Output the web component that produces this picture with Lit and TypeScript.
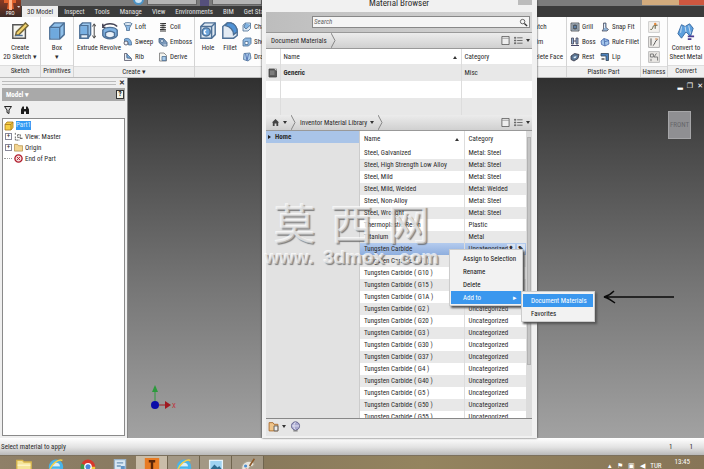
import { LitElement, html, svg, css, nothing } from "lit";

const icon = (size: number, body: unknown) =>
  html`<svg width=${size} height=${size} viewBox="0 0 20 20" fill="none" stroke="#4d7096" stroke-width="1.6" aria-hidden="true">${body}</svg>`;

const art: Record<string, unknown> = {
  sketch: svg`<path d="M2 3h14v15H2z" fill="#f6f6f0" stroke="#555"/><path d="M5 15l1-4L16 1l3 3L9 14z" fill="#f2d36b" stroke="#7a6a3a"/><path d="M5 15h8"/>`,
  box: svg`<path d="M2 6l5-5h11v13l-5 5H2z" fill="#8fc0ea"/><path d="M2 6h11v13M13 6l5-5"/><path d="M3 7h9v11H3z" fill="#6fa9dd" stroke="none"/>`,
  extrude: svg`<path d="M2 4l3-3h9v13l-3 4H2z" fill="#9cc8ee"/><path d="M2 4h9v14"/><path d="M3 5h7v9H3z" fill="#79b0e2" stroke="none"/><path d="M3 14h8v4H3z" fill="#e8eef4"/><path d="M18 3v14M16 5l2-3 2 3M16 15l2 3 2-3" stroke="#333" stroke-width="1"/>`,
  revolve: svg`<path d="M2 9c3-4 13-4 16 0v6c-3 5-13 5-16 0z" fill="#7fb2e2"/><path d="M5 12c3-2 7-2 10 0v4c-3 2-7 2-10 0z" fill="#e9f1f8"/><path d="M2 5c4-4 12-4 16 0M2 2v4h3" stroke="#445"/>`,
  loft: svg`<path d="M2 3h16l-5 9v5H7v-5z" fill="#8fbce6"/><ellipse cx="10" cy="4" rx="8" ry="3" fill="#e6f0f9"/>`,
  sweep: svg`<path d="M3 4c8-4 15 2 14 12h-6c0-6-3-7-8-6z" fill="#7eb0df"/><circle cx="6" cy="12" r="4" fill="#f1f5fa" stroke="#445"/>`,
  rib: svg`<path d="M3 3v14h14v-4L8 11V3z" fill="#e8edf3" stroke="#556"/><path d="M8 4l8 8H8z" fill="#7eb0df"/>`,
  coil: svg`<path d="M4 3h12M4 7h12M4 11h12M4 15h12M4 18h12" stroke="#333" stroke-width="2"/><path d="M4 3l12 4M4 7l12 4M4 11l12 4" stroke="#777"/>`,
  emboss: svg`<path d="M2 3h9l7 8v7h-8L2 11z" fill="#7b99bb" stroke="#3b5878"/><circle cx="8" cy="8" r="3" fill="#e6eef7"/><path d="M11 16h6" stroke="#fff"/>`,
  derive: svg`<path d="M3 2h9l5 5v11H3z" fill="#f3f3ee" stroke="#777"/><path d="M8 9h8v8H8z" fill="#a9cbe9"/>`,
  hole: svg`<path d="M2 5l4-4h12v13l-4 4H2z" fill="#dfe9f2"/><path d="M2 5h12v13M14 5l4-4"/><circle cx="8" cy="11" r="4.500" fill="#6ea6dc"/><path d="M8 9a2 2 0 0 0 0 4" stroke="#fff"/>`,
  fillet: svg`<path d="M2 5l5-4h4c4 1 7 5 7 10v4l-4 3H2z" fill="#e3ebf3"/><path d="M7 1h4c4 1 7 5 7 10l-4 3c0-5-4-9-9-10z" fill="#4f92d6"/>`,
  chamfer: svg`<path d="M2 6l5-4h10v11l-5 5H2z" fill="#dbe8f4"/><path d="M7 2l-3 8 4 4 9-8" fill="#7fb2e2"/>`,
  shell: svg`<path d="M2 6l5-4h11v11l-5 5H2z" fill="#8fb9e2"/><path d="M6 9h6v6H6z" fill="#fff"/>`,
  draft: svg`<path d="M4 3l12-1 2 11-6 5-9-3z" fill="#a8c9ea"/><path d="M7 3l3 14M13 4l-3 13" stroke="#4565a8"/>`,
  grill: svg`<path d="M2 2h16v16H2z" fill="#b6c8da" stroke="#444"/><circle cx="10" cy="10" r="4" fill="#5d7fa3" stroke="#333"/><path d="M4 6h12M4 14h12" stroke="#555"/>`,
  boss: svg`<path d="M3 2h4v12H3zM12 2h4v12h-4z" fill="#91add0" stroke="#445"/><path d="M2 17h16M7 8h5" stroke="#446" stroke-width="2"/>`,
  rest: svg`<path d="M2 8l7-5 9 2-2 8-8 5-6-3z" fill="#5d7590" stroke="#334"/><path d="M6 9l8-2-1 5-6 2z" fill="#e3edf6"/>`,
  snap: svg`<path d="M7 2h5v9l5 4-3 3H4l3-4z" fill="#8fb2d6" stroke="#556"/><path d="M9 4v8" stroke="#fff"/>`,
  rule: svg`<path d="M2 8l6-5 9 3 1 8-8 4-7-3z" fill="#a3c5ea" stroke="#4565a8"/><path d="M8 3l2 15M10 9l8-2" stroke="#3c5fa6"/>`,
  lip: svg`<path d="M2 3h15v14h-5V8H2z" fill="#4d82bd" stroke="#345"/><path d="M3 14h6" stroke="#555" stroke-width="3"/>`,
  wire: svg`<path d="M1 1h18v18H1z" fill="#f3f1ee" stroke="#ccc"/><path d="M4 14c5 2 3-8 8-7h4M12 7v6" stroke="#553"/><circle cx="12" cy="5" r="2" fill="#e58a3c" stroke="none"/>`,
  cable: svg`<path d="M1 1h18v18H1z" fill="#f1efec" stroke="#aaa"/><path d="M5 4v12M8 16c4-1 3-9 8-10" stroke="#555"/><path d="M12 5h4" stroke="#d77d3a"/>`,
  route: svg`<path d="M1 1h18v18H1z" fill="#e9e7e4" stroke="#bbb"/><path d="M4 5h5v5H4zM10 10h6v6M14 4l-4 6M5 13v4" stroke="#777"/>`,
  sheet: svg`<path d="M1 13L5 3l4 2 5-3 4 5-3 9-5-5-5 7z" fill="#5c9fdd" stroke="#3568a0" stroke-width="1"/><path d="M5 5l-1 7M13 4l2 9M9 5l1 6" stroke="#cfe2f4" stroke-width="1"/><path d="M12 16h7M12 19h4" stroke="#4b3c91" stroke-width="2"/>`,
  filter: svg`<path d="M3 3h14l-5 7v7l-4-2v-5z" fill="#ddd" stroke="#222" stroke-width="2"/>`,
  find: svg`<path d="M2 18V9l3-6h3v15zM18 18V9l-3-6h-3v15zM8 8h4v5H8z" fill="#1c1c1c" stroke="none"/>`,
  part: svg`<path d="M2 7l4-5h12v11l-4 5H2z" fill="#f6cf45" stroke="#a8761b"/><path d="M2 7h12v11M14 7l4-5" stroke="#a8761b"/>`,
  view: svg`<path d="M3 2v4M3 10v8h9M8 6h6v6H8z" stroke="#333" stroke-dasharray="4 1"/><path d="M13 14h6" stroke="#333" stroke-width="2"/>`,
  folder: svg`<path d="M1 3h7l2 3h9v12H1z" fill="#f3d592" stroke="#b08c43"/>`,
  end: svg`<circle cx="10" cy="10" r="8" fill="#f5dede" stroke="#b01c2c" stroke-width="3"/><path d="M6 6l8 8M14 6l-8 8" stroke="#b01c2c" stroke-width="2"/>`,
  search: svg`<circle cx="8" cy="8" r="5" stroke="#333"/><path d="M12 12l6 6" stroke="#333" stroke-width="3"/>`,
  home: svg`<path d="M2 10l8-8 8 8h-2v8h-4v-6H8v6H4v-8z" fill="#444" stroke="none"/>`,
  pane: svg`<path d="M2 1h16v18H2z" fill="#eee" stroke="#444"/><path d="M2 5h16" stroke="#888"/>`,
  list: svg`<path d="M1 3h3v2H1zM1 9h3v2H1zM1 15h3v2H1zM7 4h12M7 10h12M7 16h12" stroke="#444"/>`,
  swatch: svg`<path d="M2 2h15v16H2z" fill="#5c5c5c" stroke="#444"/><path d="M4 5h9v9H4z" fill="#7d7d7d" stroke="none"/><path d="M12 1l5 5V1z" fill="#ddd" stroke="none"/>`,
  library: svg`<path d="M2 3h7l2 3h7v12H2z" fill="#f0c58a" stroke="#a8692a"/><path d="M11 9h7v9h-7z" fill="#eee" stroke="#555"/>`,
  sphere: svg`<circle cx="10" cy="9" r="7.500" fill="#a9a9cf" stroke="#5c5c88"/><path d="M3 9h14M10 2c-4 4-4 10 0 14" stroke="#e9e9f6"/><path d="M6 18h8" stroke="#555"/>`,
  explorer: svg`<path d="M1 3h7l2 2h9v15H1z" fill="#f5e59a" stroke="#d9b64b"/><path d="M2 9h16" stroke="#fff7cf"/>`,
  ie: svg`<circle cx="10" cy="11" r="7" fill="#d9eef8" stroke="#49b4ea" stroke-width="4"/><path d="M5 12h11" stroke="#49b4ea" stroke-width="3"/><path d="M2 17C3 8 13 1 18 3" stroke="#f3d04b" stroke-width="2"/>`,
  chrome: svg`<circle cx="10" cy="11" r="9" fill="#d9382c" stroke="none"/><path d="M10 11L2 7a9 9 0 0 0 5 13z" fill="#3d9a46" stroke="none"/><path d="M10 11l-3 9a9 9 0 0 0 12-9z" fill="#f4cc3a" stroke="none"/><circle cx="10" cy="11" r="4" fill="#4a86d8" stroke="#fff"/>`,
  notes: svg`<path d="M3 2h14v18H3z" fill="#d9e8f4" stroke="#9ab2c8"/><path d="M6 6h8M6 10h5" stroke="#6f93b5"/><path d="M11 10h5v7h-5z" fill="#5f93c5" stroke="none"/>`,
  inventor: svg`<path d="M1 0h18v20H1z" fill="#e87b24" stroke="none"/><path d="M6 4h8M10 4v16" stroke="#5a2408" stroke-width="3"/>`,
  photos: svg`<path d="M2 3h16v13H2z" fill="#9fd3f2" stroke="#e8f4fb"/><path d="M3 14l5-6 4 4 2-2 4 5z" fill="#2f6c8f" stroke="none"/>`,
  paint: svg`<path d="M2 13c0-7 7-11 14-8 4 3 0 6-3 6s-1 7-5 8-6-2-6-6z" fill="#e8e4dc" stroke="#aaa28e"/><circle cx="7" cy="10" r="2" fill="#4d8fd0" stroke="none"/><circle cx="8" cy="15" r="2" fill="#d8493a" stroke="none"/><path d="M12 10l6-9" stroke="#8c5a2a" stroke-width="2"/>`,
};

type Cmd = [string, string];
interface Group { id: string; title: string; menu?: boolean; big: Cmd[]; cols: Cmd[][] }

const leftGroups: Group[] = [
  { id: "sketch", title: "Sketch", big: [["sketch", "Create\n2D Sketch ▾"]], cols: [] },
  { id: "primitives", title: "Primitives", big: [["box", "Box\n▾"]], cols: [] },
  { id: "create", title: "Create", menu: true, big: [["extrude", "Extrude"], ["revolve", "Revolve"]],
    cols: [[["loft", "Loft"], ["sweep", "Sweep"], ["rib", "Rib"]], [["coil", "Coil"], ["emboss", "Emboss"], ["derive", "Derive"]]] },
  { id: "modify", title: "", big: [["hole", "Hole"], ["fillet", "Fillet"]],
    cols: [[["chamfer", "Chamfer"], ["shell", "Shell"], ["draft", "Draft"]]] },
];
const rightGroups: Group[] = [
  { id: "surface", title: "", big: [], cols: [[["", "Patch"], ["", "Trim"], ["", "Delete Face"]]] },
  { id: "plastic", title: "Plastic Part", big: [],
    cols: [[["grill", "Grill"], ["boss", "Boss"], ["rest", "Rest"]], [["snap", "Snap Fit"], ["rule", "Rule Fillet"], ["lip", "Lip"]]] },
  { id: "harness", title: "Harness", big: [], cols: [[["wire", ""], ["cable", ""], ["route", ""]]] },
  { id: "convert", title: "Convert", big: [["sheet", "Convert to\nSheet Metal"]], cols: [] },
];

const tabs = ["3D Model", "Inspect", "Tools", "Manage", "View", "Environments", "BIM", "Get Started"];

const materials: [string, string][] = [
  ["Steel, Galvanized", "Metal: Steel"],
  ["Steel, High Strength Low Alloy", "Metal: Steel"],
  ["Steel, Mild", "Metal: Steel"],
  ["Steel, Mild, Welded", "Metal: Welded"],
  ["Steel, Non-Alloy", "Metal: Steel"],
  ["Steel, Wrought", "Metal: Steel"],
  ["Thermoplastic Resin", "Plastic"],
  ["Titanium", "Metal"],
  ["Tungsten Carbide", "Uncategorized"],
  ...["G1", "G10", "G15", "G1A", "G2", "G20", "G3", "G30", "G37", "G4", "G40", "G5", "G50", "G55"].map(
    (g): [string, string] => [`Tungsten Carbide ( ${g} )`, "Uncategorized"],
  ),
];

class AppRoot extends LitElement {
  static properties = { selected: { state: true } };
  declare selected: string;

  constructor() {
    super();
    this.selected = "Tungsten Carbide";
  }

  static styles = css`
    :host {
      display: flex; flex-direction: column; height: 100vh; overflow: hidden; position: relative;
      font: 7px/10px "Roboto Condensed", Roboto, "Liberation Sans", sans-serif; color: #2c2c2c; background: #eee;
    }
    * { box-sizing: border-box; }
    button { font: inherit; color: inherit; background: none; border: 0; padding: 0; margin: 0; white-space: nowrap; }
    svg { display: block; flex: none; }
    .shell { flex: 1; min-height: 0; display: flex; flex-direction: column; position: relative; }

    .top { display: flex; background: #3b3b3b; flex: none; height: 17px; }
    .app-btn { width: 21px; background: linear-gradient(#8b3a22, #3a2a26); color: #fff; display: flex; justify-content: center; }
    .bars { flex: 1; min-width: 0; display: flex; flex-direction: column; }
    .quick { height: 6px; background: #7c7c7c; display: flex; overflow: hidden; padding-left: 112px; gap: 3px; }
    .orb { width: 11px; height: 11px; border-radius: 50%; background: #cfe6f6; border: 2px solid #4c93c6; margin-top: -6px; }
    .combo { width: 50px; height: 5px; background: #b4b4b4; border: 1px solid #666; border-top: 0; }
    .grid-ic { width: 9px; background: #55507c; }
    .desk { margin-left: auto; width: 62px; height: 5px; background: linear-gradient(90deg, #d2ab7d 60%, #cf5740 60%); }
    .tabs { display: flex; height: 11px; color: #e2e2e2; }
    .tab { padding: 0 5px; }
    .tab.on { background: #eee; color: #333; padding: 0 5px; margin: 0 1px; }

    .ribbon { display: flex; flex: none; background: #fdfdfd; border-bottom: 1px solid #bbb; height: 61px; }
    .group { display: flex; flex-direction: column; border-right: 1px solid #d4d4d4; }
    .group .body { flex: 1; display: flex; gap: 2px; padding: 2px 3px; }
    .group h2 { margin: 0; font: inherit; text-align: center; background: #efefef; border-top: 1px solid #ddd; height: 12px; white-space: nowrap; }
    .big { display: flex; flex-direction: column; align-items: center; gap: 4px; padding-top: 3px; line-height: 9px; white-space: pre; min-width: 20px; }
    .col { display: flex; flex-direction: column; }
    .cmd { display: flex; align-items: center; gap: 2px; height: 15px; text-align: left; }
    .sketch { width: 41px; } .primitives { width: 33px; } .create { width: 121px; }
    .sketch .body, .primitives .body, .convert .body, .harness .body { justify-content: center; padding: 2px 0; }
    .create .col { width: 33px; }
    .surface { width: 40px; margin-left: auto; }
    .surface .body { justify-content: flex-end; }
    .plastic { width: 74px; } .plastic .col { width: 28px; }
    .harness { width: 27px; }
    .convert { width: 36px; border: 0; }

    .work { flex: 1; min-height: 0; display: flex; }
    .browser { width: 128px; flex: none; display: flex; flex-direction: column; border-right: 1px solid #888; padding: 0 2px 2px; background: #efefef; }
    .grip { height: 10px; display: flex; align-items: center; gap: 3px; font-weight: bold; }
    .grip i { flex: 1; height: 4px; border: solid #bbb; border-width: 1px 0; }
    .head { height: 13px; background: #a9a9a9; color: #fff; font-weight: bold; display: flex; align-items: center; padding: 0 1px 0 4px; justify-content: space-between; }
    .help { background: #f4f4e8; color: #111; border: 1px solid #333; width: 8px; height: 9px; line-height: 7px; }
    .tools { height: 17px; display: flex; align-items: center; gap: 7px; padding-left: 1px; }
    .tree { flex: 1; background: #fff; border: 1px solid #8a8a8a; margin: 0; padding: 1px; list-style: none; }
    .tree li { display: flex; align-items: center; height: 11px; gap: 2px; }
    .tree .exp { width: 7px; height: 7px; border: 1px solid #889; line-height: 5px; text-align: center; margin-left: 1px; }
    .tree .stub { width: 8px; height: 1px; border-top: 1px dotted #999; }
    .tree mark { background: #3399f3; color: #d5ecff; line-height: 9px; }

    .canvas { flex: 1; background: linear-gradient(#303030, #4a4a4a 20%, #787878 60%, #a2a2a2); position: relative; }
    .mdi { position: absolute; right: 1px; top: 3px; display: flex; gap: 4px; color: #fff; font: bold 7px/10px "DejaVu Sans", sans-serif; }
    .cube { position: absolute; right: 13px; top: 33px; width: 23px; height: 28px; background: #8f8f92; border: 1px solid #a6a6a8; color: #66666a; }
    .triad { position: absolute; left: 20px; bottom: 20px; }

    .dialog { position: absolute; left: 262px; top: 0; bottom: 0; width: 275px; display: flex; flex-direction: column; background: #e6e6e6; border: solid #f1f1f1; border-width: 0 5px 2px 4px; box-shadow: 0 0 2px #333; }
    .title { margin: 0; height: 12px; font-weight: normal; font-size: 9px; line-height: 6px; background: #f1f1f1; flex: none; display: flex; justify-content: center; position: relative; }
    .close { position: absolute; right: 0; top: 0; width: 14px; height: 5px; background: #bcbcbc; }
    .searchbar { height: 21px; flex: none; background: linear-gradient(90deg, #bdbdbd, #d6d6d6); display: flex; padding: 4px 2px 4px 46px; border-bottom: 1px solid #999; }
    .search { flex: 1; display: flex; align-items: center; background: #f5f5f5; border: 1px solid #888; padding-right: 1px; }
    .search input { flex: 1; min-width: 0; border: 0; background: none; font: inherit; font-style: italic; padding: 0 1px; outline: 0; }
    .search input::placeholder { color: #666; }
    .crumbs { height: 16px; flex: none; display: flex; align-items: center; background: linear-gradient(#ececec, #d0d0d0); border-bottom: 1px solid #999; padding: 0 2px 0 5px; gap: 4px; }
    .chev { width: 5px; height: 15px; }
    .push { margin-left: auto; display: flex; gap: 4px; }
    .push button, .drop { display: flex; align-items: center; gap: 3px; }
    .tri { width: 0; height: 0; border: 2px solid transparent; border-top: 3px solid #333; border-bottom: 0; }
    .tri.up { border: 2px solid transparent; border-bottom: 3px solid #333; border-top: 0; float: right; margin: 4px 1px 0 0; }

    table { border-collapse: collapse; table-layout: fixed; width: 100%; background: #fff; }
    th, td { text-align: left; font-weight: normal; padding: 0 4px; white-space: nowrap; overflow: hidden; border-right: 1px solid #ddd; }
    th:last-child, td:last-child { border-right: 0; }
    .doc { flex: none; }
    .doc th { height: 15px; } .doc td { height: 17px; }
    .doc th, .doc td { padding: 0 3px; }
    .doc td:first-child { padding: 0 2px; }
    .doc tbody tr:nth-child(odd), .lib tbody tr:nth-child(even) { background: #e8e8e8; }
    .c-ic { width: 14px; } .c-cat { width: 71px; } .c-cat2 { width: 62px; }
    .split { flex: 1; min-height: 0; display: flex; border-bottom: 1px solid #888; }
    .side { width: 94px; flex: none; background: #e2e2e2; border-right: 1px solid #ccc; }
    .side button { width: 100%; height: 12px; background: #a9c4e8; text-align: left; font-weight: bold; padding-left: 2px; display: flex; align-items: center; gap: 4px; }
    .side button i { width: 0; height: 0; border: 2px solid transparent; border-left: 3px solid #222; border-right: 0; }
    .list { flex: 1; min-width: 0; overflow: hidden; }
    .lib th { height: 16px; } .lib td { height: 12px; }
    .lib tbody tr.sel { background: linear-gradient(#b4cbee, #8eaede); }
    .acts { float: right; display: flex; gap: 2px; margin-right: -3px; }
    .acts button { background: #d9e2f0; width: 8px; height: 10px; font-weight: bold; text-align: center; }
    .scroll { width: 6px; background: #dcdcdc; display: flex; flex-direction: column; padding: 6px 1px 53px; }
    .scroll i { flex: 1; background: #c4c4c4; border: 1px solid #b2b2b2; }
    .foot { height: 17px; flex: none; display: flex; align-items: center; gap: 4px; padding: 0 2px 2px; }

    .menu { position: absolute; display: flex; flex-direction: column; width: 74px; padding: 2px 1px 1px; background: #f2f2f2; border: 1px solid #ccc; box-shadow: 2px 2px 2px #555; }
    .ctx { left: 449px; top: 249px; } .sub { left: 521px; top: 291px; }
    .menu button { height: 13px; padding: 0 4px 0 12px; text-align: left; display: flex; justify-content: space-between; align-items: center; color: #111; }
    .sub button { padding-left: 8px; }
    .menu .hot { background: #3a97ee; color: #fff; }
    .arrow { position: absolute; left: 602px; top: 289px; }

    .mark { position: absolute; left: 265px; top: 194px; width: 174px; color: rgba(225, 225, 225, 0.55); pointer-events: none; text-shadow: -1px -1px 0 rgba(255, 255, 255, 0.7), 1px 1px 1px rgba(90, 90, 90, 0.75); }
    .mark .cn { display: flex; justify-content: center; gap: 15px; font: 42px/56px "Noto Sans CJK SC", sans-serif; height: 54px; }
    .mark .url { display: flex; justify-content: space-between; font: bold 19px/20px "Liberation Sans", sans-serif; }

    .status { height: 17px; flex: none; display: flex; align-items: center; background: linear-gradient(#fff, #e2e2e2 55%, #b9b9b9); padding: 0 11px 0 1px; gap: 17px; }
    .status .msg { flex: 1; }
    .taskbar { height: 14px; flex: none; display: flex; overflow: hidden; background: linear-gradient(90deg, #8f8068, #85765b 30%, #94845f 60%, #877557); border-top: 1px solid #7b705d; padding-left: 8px; color: #fff; }
    .taskbar button { width: 32px; height: 18px; display: flex; justify-content: center; padding-top: 2px; flex: none; }
    .taskbar .open { background: #a39885; border-right: 1px solid #6f644e; }
    .taskbar .now { background: #c9bda9; }
    .tray { margin-left: auto; display: flex; gap: 5px; padding: 5px 14px 0 0; }
    .tray time { margin: -4px 0 0 8px; }
  `;

  private group(g: Group) {
    return html`<section class="group ${g.id}">
      <div class="body">
        ${g.big.map(([i, t]) => html`<button class="big">${icon(18, art[i])}<span>${t}</span></button>`)}
        ${g.cols.map((c) => html`<div class="col">${c.map(([i, t]) => html`<button class="cmd" aria-label=${t || i}>${i ? icon(t ? 10 : 12, art[i]) : nothing}${t}</button>`)}</div>`)}
      </div>
      <h2>${g.title}${g.menu ? " ▾" : ""}</h2>
    </section>`;
  }

  private viewButtons() {
    return html`<div class="push">
      <button aria-label="Show pane">${icon(9, art.pane)}</button>
      <button aria-label="View options">${icon(9, art.list)}<i class="tri"></i></button>
    </div>`;
  }

  private chevron() {
    return html`<svg class="chev" viewBox="0 0 5 15" fill="none" stroke="#888" aria-hidden="true"><path d="M0 0l4 7.500L0 15" /></svg>`;
  }

  private dialog() {
    return html`<section class="dialog" aria-label="Material Browser">
      <h1 class="title">Material Browser<button class="close" aria-label="Close"></button></h1>
      <div class="searchbar"><label class="search"><input aria-label="Search" placeholder="Search" />${icon(9, art.search)}</label></div>
      <nav class="crumbs"><button>Document Materials</button>${this.chevron()}${this.viewButtons()}</nav>
      <table class="doc">
        <colgroup><col class="c-ic" /><col /><col class="c-cat" /></colgroup>
        <thead><tr><th></th><th>Name<i class="tri up"></i></th><th>Category</th></tr></thead>
        <tbody>
          <tr><td>${icon(10, art.swatch)}</td><td><b>Generic</b></td><td>Misc</td></tr>
          <tr><td></td><td></td><td></td></tr>
          <tr><td></td><td></td><td></td></tr>
        </tbody>
      </table>
      <nav class="crumbs">
        <button class="drop" aria-label="Home">${icon(9, art.home)}<i class="tri"></i></button>${this.chevron()}
        <button class="drop">Inventor Material Library <i class="tri"></i></button>${this.chevron()}${this.viewButtons()}
      </nav>
      <div class="split">
        <div class="side"><button><i></i>Home</button></div>
        <div class="list">
          <table class="lib">
            <colgroup><col /><col class="c-cat2" /></colgroup>
            <thead><tr><th>Name<i class="tri up"></i></th><th>Category</th></tr></thead>
            <tbody>
              ${materials.map(([n, c]) => html`<tr class=${n === this.selected ? "sel" : ""} @click=${() => (this.selected = n)}>
                <td>${n}</td><td>${n === this.selected ? html`<span class="acts"><button>⬆</button><button>✎</button></span>` : nothing}${c}</td></tr>`)}
            </tbody>
          </table>
        </div>
        <div class="scroll"><i></i></div>
      </div>
      <div class="foot"><button class="drop" aria-label="Libraries">${icon(11, art.library)}<i class="tri"></i></button><button aria-label="New material">${icon(11, art.sphere)}</button></div>
    </section>`;
  }

  render() {
    return html`
      <div class="shell">
        <header class="top">
          <button class="app-btn" aria-label="Application menu">
            <svg width="20" height="17" viewBox="0 0 20 17"><path d="M3 0h12v3h-3l1 6H6l1-6H3z" fill="#e0622c" /><path d="M8 0h3v10H8z" fill="#ffb48a" /><text x="5" y="15" font-size="5" fill="#fff">PRO</text><path d="M16 6h3l-1 2z" fill="#ddd" /></svg>
          </button>
          <div class="bars">
            <div class="quick"><i class="orb"></i><i class="combo"></i><i class="grid-ic"></i><i class="combo"></i><i class="desk"></i></div>
            <nav class="tabs">${tabs.map((t, i) => html`<button class="tab ${i ? "" : "on"}">${t}</button>`)}</nav>
          </div>
        </header>
        <div class="ribbon">${leftGroups.map((g) => this.group(g))}${rightGroups.map((g) => this.group(g))}</div>
        <main class="work">
          <aside class="browser">
            <div class="grip"><i></i><button aria-label="Close panel">✕</button></div>
            <div class="head"><button>Model ▾</button><button class="help">?</button></div>
            <div class="tools"><button aria-label="Filter">${icon(10, art.filter)}</button><button aria-label="Find">${icon(10, art.find)}</button></div>
            <ul class="tree">
              <li>${icon(10, art.part)}<mark>Part1</mark></li>
              <li><span class="exp">+</span>${icon(9, art.view)}View: Master</li>
              <li><span class="exp">+</span>${icon(9, art.folder)}Origin</li>
              <li><span class="stub"></span>${icon(9, art.end)}End of Part</li>
            </ul>
          </aside>
          <div class="canvas">
            <div class="mdi"><button aria-label="Minimize">▂</button><button aria-label="Restore">❐</button><button aria-label="Close">✕</button></div>
            <button class="cube">FRONT</button>
            <svg class="triad" width="32" height="36" viewBox="0 0 32 36"><path d="M7 22V8" stroke="#2c9a3c" /><path d="M4 10l3-7 3 7z" fill="#2c9a3c" /><path d="M7 23h10" stroke="#a01820" /><path d="M17 19l6 4-6 4z" fill="#a01820" /><circle cx="7" cy="23" r="4" fill="#0c0ca8" /><text x="24" y="26" font-size="7" fill="#c03038">X</text></svg>
          </div>
        </main>
        ${this.dialog()}
        <div class="mark"><div class="cn"><span>莫</span><span>西</span><span>网</span></div><div class="url"><span>www.</span><span>3dmox</span><span>.com</span></div></div>
        <div class="menu ctx"><button>Assign to Selection</button><button>Rename</button><button>Delete</button><button class="hot">Add to<span>▸</span></button></div>
        <div class="menu sub"><button class="hot">Document Materials</button><button>Favorites</button></div>
        <svg class="arrow" width="74" height="16" viewBox="0 0 74 16" fill="none" stroke="#0a0a0a" stroke-width="1.500"><path d="M2 8h70M12 2C9 5 6 7 2 8c4 1 7 3 11 6" /></svg>
      </div>
      <footer class="status"><span class="msg">Select material to apply</span><span>1</span><span>1</span></footer>
      <nav class="taskbar">
        ${["explorer", "ie", "chrome", "notes"].map((n) => html`<button aria-label=${n}>${icon(16, art[n])}</button>`)}
        ${["inventor", "ie", "photos", "paint"].map((n, i) => html`<button class="open ${i ? "" : "now"}" aria-label=${n}>${icon(16, art[n])}</button>`)}
        <div class="tray"><span>▴</span><span>⚑</span><span>▣</span><span>◀</span><span>TUR</span><time>13:45</time></div>
      </nav>
    `;
  }
}
customElements.define("app-root", AppRoot);
